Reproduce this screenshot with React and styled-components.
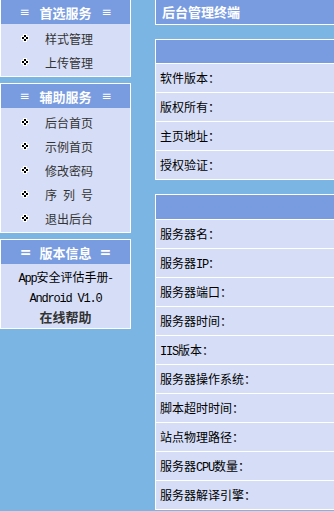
import styled, { createGlobalStyle } from 'styled-components';

const GlobalStyle = createGlobalStyle`
  html, body {
    margin: 0;
    padding: 0;
    background: #7bb5e4;
    overflow: hidden;
  }
  body {
    font-family: "Noto Sans CJK SC", "Liberation Sans", sans-serif;
    font-size: 12px;
  }
`;

const Page = styled.div`
  display: flex;
  align-items: flex-start;
  gap: 24px;
  margin-top: -1px;
  width: 340px;
`;

const Sidebar = styled.div`
  width: 131px;
  flex: none;
  display: flex;
  flex-direction: column;
  gap: 6px;
`;

const MenuBox = styled.div`
  border: 1px solid #fff;
  background: #d6def7;
`;

const MenuHead = styled.div`
  height: 24px;
  background: #799ce0;
  display: flex;
  align-items: center;
  justify-content: center;
  gap: ${({ $gap }) => $gap || 10}px;
  color: #fff;
  font-size: 13px;
  font-weight: bold;
`;

const Deco = styled.span`
  font-family: "DejaVu Sans", sans-serif;
  font-size: ${({ $size }) => $size || 12}px;
  font-weight: ${({ $bold }) => ($bold ? 'bold' : 'normal')};
  line-height: 1;
`;

const MenuList = styled.ul`
  list-style: none;
  margin: 0;
  padding: 2px 0;
`;

const MenuItem = styled.li`
  height: 24px;
  display: flex;
  align-items: center;
  gap: 16px;
  padding-left: 20px;
  color: #333;
  font-size: 12px;
  white-space: pre;
`;

const InfoBody = styled.div`
  padding: 3px 0 1px;
  text-align: center;
  color: #000;
`;

const InfoLine = styled.div`
  height: 20px;
  line-height: 20px;
  font-weight: ${({ $bold }) => ($bold ? 'bold' : 'normal')};
  font-size: ${({ $bold }) => ($bold ? 13 : 12)}px;
  color: ${({ $bold }) => ($bold ? '#333' : '#000')};
`;

const Latin = styled.span`
  font-family: "Liberation Mono", monospace;
  letter-spacing: -1.2px;
`;

const Main = styled.div`
  flex: 1;
  display: flex;
  flex-direction: column;
  gap: 14px;
`;

const Panel = styled.div`
  border: 1px solid #fff;
  border-right: none;
  display: flex;
  flex-direction: column;
  gap: 1px;
  background: #fff;
`;

const PanelHead = styled.div`
  height: ${({ $h }) => $h || 24}px;
  background: #799ce0;
  color: #fff;
  font-size: 13px;
  font-weight: bold;
  line-height: ${({ $h }) => $h || 24}px;
  padding-left: 6px;
`;

const Row = styled.div`
  height: 28px;
  line-height: 28px;
  background: #d6def7;
  padding-left: 4px;
  color: #000;
  font-size: 12px;
`;

const Bullet = () => (
  <svg width="8" height="8" viewBox="0 0 8 8" style={{ flex: 'none' }}>
    <rect x="2" y="0" width="4" height="8" fill="#fff" />
    <rect x="0" y="2" width="8" height="4" fill="#fff" />
    <rect x="3" y="1" width="2" height="2" fill="#000" />
    <rect x="1" y="3" width="2" height="2" fill="#000" />
    <rect x="5" y="3" width="2" height="2" fill="#000" />
    <rect x="3" y="5" width="2" height="2" fill="#000" />
  </svg>
);

const withLatin = (text) =>
  text.split(/([A-Za-z0-9.\- ]+)/).map((part, i) =>
    /[A-Za-z0-9]/.test(part) ? <Latin key={i}>{part}</Latin> : part
  );

const menus = [
  { title: '首选服务', items: ['样式管理', '上传管理'] },
  { title: '辅助服务', items: ['后台首页', '示例首页', '修改密码', '序\u2002列\u2002号', '退出后台'] },
];

const softwareRows = ['软件版本：', '版权所有：', '主页地址：', '授权验证：'];
const serverRows = [
  '服务器名：',
  '服务器IP：',
  '服务器端口：',
  '服务器时间：',
  'IIS版本：',
  '服务器操作系统：',
  '脚本超时时间：',
  '站点物理路径：',
  '服务器CPU数量：',
  '服务器解译引擎：',
];

export default function App() {
  return (
    <>
      <GlobalStyle />
      <Page>
        <Sidebar>
          {menus.map((m) => (
            <MenuBox key={m.title}>
              <MenuHead>
                <Deco>≡</Deco>
                <span>{m.title}</span>
                <Deco>≡</Deco>
              </MenuHead>
              <MenuList>
                {m.items.map((it) => (
                  <MenuItem key={it}>
                    <Bullet />
                    <span>{it}</span>
                  </MenuItem>
                ))}
              </MenuList>
            </MenuBox>
          ))}
          <MenuBox>
            <MenuHead $gap={8}>
              <Deco $size={14} $bold>=</Deco>
              <span>版本信息</span>
              <Deco $size={14} $bold>=</Deco>
            </MenuHead>
            <InfoBody>
              <InfoLine>{withLatin('App安全评估手册-')}</InfoLine>
              <InfoLine>{withLatin('Android V1.0')}</InfoLine>
              <InfoLine $bold>在线帮助</InfoLine>
            </InfoBody>
          </MenuBox>
        </Sidebar>

        <Main>
          <Panel>
            <PanelHead>后台管理终端</PanelHead>
          </Panel>
          <Panel>
            <PanelHead $h={23} />
            {softwareRows.map((r) => (
              <Row key={r}>{r}</Row>
            ))}
          </Panel>
          <Panel>
            <PanelHead />
            {serverRows.map((r) => (
              <Row key={r}>{withLatin(r)}</Row>
            ))}
          </Panel>
        </Main>
      </Page>
    </>
  );
}
